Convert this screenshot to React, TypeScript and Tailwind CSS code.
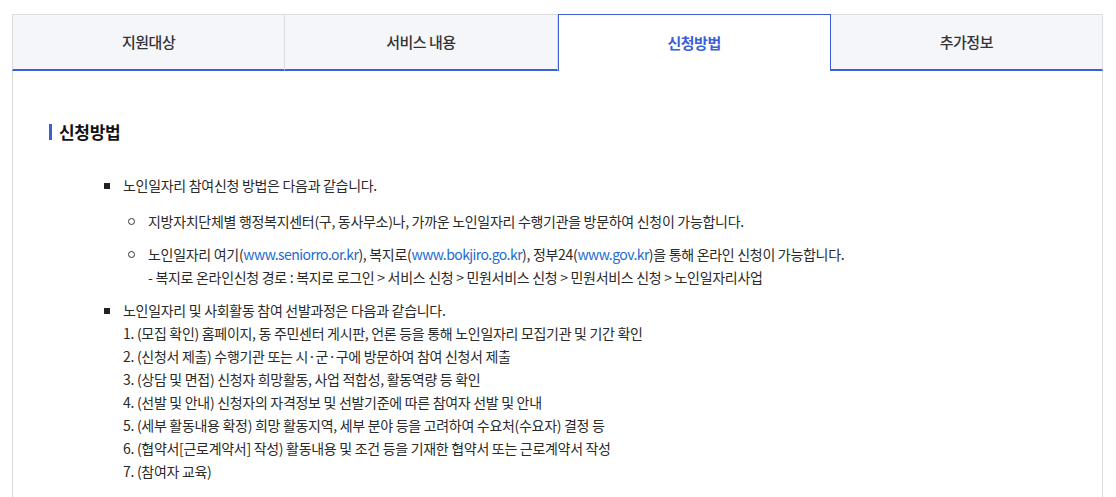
import React, { useState } from "react";

const tabs = ["지원대상", "서비스 내용", "신청방법", "추가정보"];

const steps = [
  "1. (모집 확인) 홈페이지, 동 주민센터 게시판, 언론 등을 통해 노인일자리 모집기관 및 기간 확인",
  "2. (신청서 제출) 수행기관 또는 시·군·구에 방문하여 참여 신청서 제출",
  "3. (상담 및 면접) 신청자 희망활동, 사업 적합성, 활동역량 등 확인",
  "4. (선발 및 안내) 신청자의 자격정보 및 선발기준에 따른 참여자 선발 및 안내",
  "5. (세부 활동내용 확정) 희망 활동지역, 세부 분야 등을 고려하여 수요처(수요자) 결정 등",
  "6. (협약서[근로계약서] 작성) 활동내용 및 조건 등을 기재한 협약서 또는 근로계약서 작성",
  "7. (참여자 교육)",
];

const Link = ({ children }: { children: React.ReactNode }) => (
  <span className="tracking-[-0.55px] text-[#1c6ad4]">{children}</span>
);

const Square = () => <span className="mt-[9px] mr-[13px] h-[6px] w-[6px] shrink-0 bg-[#222]" />;
const Circle = () => (
  <span className="mt-[8px] mr-[13px] h-[7px] w-[7px] shrink-0 rounded-full border border-[#333]" />
);

export default function App() {
  const [active, setActive] = useState(2);

  return (
    <div
      className="min-h-[497px] bg-white pt-[14px] pl-[12px] pr-[13px] text-[#2a2a2a]"
      style={{ fontFamily: '"Noto Sans CJK KR", "Noto Sans", sans-serif' }}
    >
      {/* tab bar */}
      <div className="flex">
        {tabs.map((t, i) => {
          const on = i === active;
          return (
            <button
              key={t}
              onClick={() => setActive(i)}
              className={
                on
                  ? "h-[57px] flex-1 border border-b-0 border-[#3b5fd8] bg-white text-[15px] font-bold tracking-[-0.5px] text-[#3b5fd8]"
                  : "h-[57px] flex-1 border-t border-r border-b-2 border-t-[#ddd] border-r-[#ddd] border-b-[#3b5fd8] bg-[#f5f6fa] text-[15px] font-medium tracking-[-0.5px] text-[#333] first:border-l first:border-l-[#ddd] last:border-r-[#ddd]"
              }
            >
              {t}
            </button>
          );
        })}
      </div>

      {/* panel */}
      <div className="min-h-[426px] border-x border-[#ddd] pt-[49px] pl-[36px] text-[14px] leading-[23px] tracking-[-0.3px]">
        <h3 className="flex items-center text-[17px] font-bold leading-[24px] tracking-[-0.3px] text-[#111]">
          <span className="mr-[7px] h-[16px] w-[3px] bg-[#3b5fd8]" />
          신청방법
        </h3>

        <ul className="mt-[30px] pl-[55px]">
          <li className="flex">
            <Square />
            <div>
              <p>노인일자리 참여신청 방법은 다음과 같습니다.</p>
              <ul className="mt-[13px] ml-[5px] space-y-[10px]">
                <li className="flex">
                  <Circle />
                  <p>지방자치단체별 행정복지센터(구, 동사무소)나, 가까운 노인일자리 수행기관을 방문하여 신청이 가능합니다.</p>
                </li>
                <li className="flex">
                  <Circle />
                  <div>
                    <p>
                      노인일자리 여기(<Link>www.seniorro.or.kr</Link>), 복지로(<Link>www.bokjiro.go.kr</Link>), 정부24(
                      <Link>www.gov.kr</Link>)을 통해 온라인 신청이 가능합니다.
                    </p>
                    <p>- 복지로 온라인신청 경로 : 복지로 로그인 &gt; 서비스 신청 &gt; 민원서비스 신청 &gt; 민원서비스 신청 &gt; 노인일자리사업</p>
                  </div>
                </li>
              </ul>
            </div>
          </li>
          <li className="mt-[10px] flex">
            <Square />
            <div>
              <p>노인일자리 및 사회활동 참여 선발과정은 다음과 같습니다.</p>
              {steps.map((s) => (
                <p key={s}>{s}</p>
              ))}
            </div>
          </li>
        </ul>
      </div>
    </div>
  );
}
